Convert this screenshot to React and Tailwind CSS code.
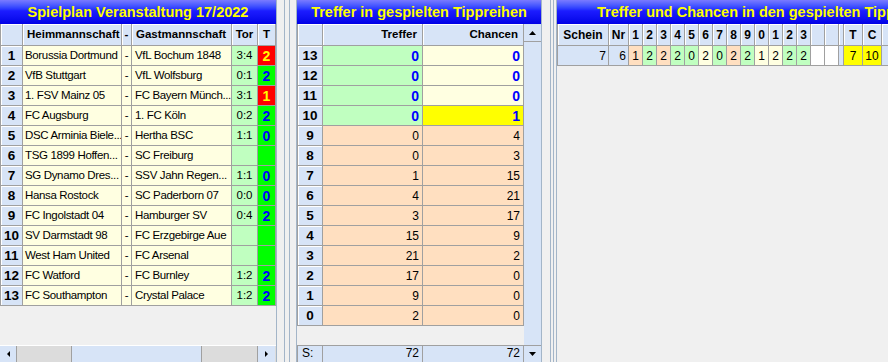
import React from "react";

const LINE = "border-[#a0a0a0]";
const HDR = "bg-[#d7e4f7]";
const BEVEL = "shadow-[inset_1px_1px_0_#ffffff]";
const PALE = "bg-[#ffffe1]";
const LGREEN = "bg-[#c0ffc0]";
const PEACH = "bg-[#ffdfc0]";

const games = [
  { h: "Borussia Dortmund", g: "VfL Bochum 1848", s: "3:4", t: "2", red: true },
  { h: "VfB Stuttgart", g: "VfL Wolfsburg", s: "0:1", t: "2" },
  { h: "1. FSV Mainz 05", g: "FC Bayern Münch...", s: "3:1", t: "1", red: true },
  { h: "FC Augsburg", g: "1. FC Köln", s: "0:2", t: "2" },
  { h: "DSC Arminia Biele...", g: "Hertha BSC", s: "1:1", t: "0" },
  { h: "TSG 1899 Hoffen...", g: "SC Freiburg", s: "", t: "" },
  { h: "SG Dynamo Dres...", g: "SSV Jahn Regen...", s: "1:1", t: "0" },
  { h: "Hansa Rostock", g: "SC Paderborn 07", s: "0:0", t: "0" },
  { h: "FC Ingolstadt 04", g: "Hamburger SV", s: "0:4", t: "2" },
  { h: "SV Darmstadt 98", g: "FC Erzgebirge Aue", s: "", t: "" },
  { h: "West Ham United", g: "FC Arsenal", s: "", t: "" },
  { h: "FC Watford", g: "FC Burnley", s: "1:2", t: "2" },
  { h: "FC Southampton", g: "Crystal Palace", s: "1:2", t: "2" },
];

// [richtige, treffer, chancen]
const hits = [
  [13, 0, 0], [12, 0, 0], [11, 0, 0], [10, 0, 1],
  [9, 0, 4], [8, 0, 3], [7, 1, 15], [6, 4, 21], [5, 3, 17],
  [4, 15, 9], [3, 21, 2], [2, 17, 0], [1, 9, 0], [0, 2, 0],
];

// tipp-reihe im schein, farbe je feld
const tipps = [
  ["1", "p"], ["2", "g"], ["2", "p"], ["2", "g"], ["0", "g"], ["2", "y"], ["0", "g"],
  ["2", "p"], ["2", "g"], ["1", "y"], ["2", "y"], ["2", "g"], ["2", "g"],
];
const tippBg = { p: PEACH, g: LGREEN, y: PALE };

const Tri = ({ dir }) => {
  if (dir === "up") return <svg width="7" height="4" viewBox="0 0 7 4"><polygon points="0,4 7,4 3.5,0" fill="#000" /></svg>;
  if (dir === "down") return <svg width="7" height="4" viewBox="0 0 7 4"><polygon points="0,0 7,0 3.5,4" fill="#000" /></svg>;
  if (dir === "left") return <svg width="3" height="6" viewBox="0 0 3 6"><polygon points="3,0 3,6 0,3" fill="#000" /></svg>;
  return <svg width="3" height="6" viewBox="0 0 3 6"><polygon points="0,0 0,6 3,3" fill="#000" /></svg>;
};

const Title = ({ children, className = "" }) => (
  <div className={"h-[24px] shrink-0 flex items-center bg-linear-to-b from-[#7a7aff] via-[#1c1cff] via-45% to-[#0000e6] text-[#ffff00] font-bold text-[14.5px] whitespace-nowrap overflow-hidden " + className}>
    {children}
  </div>
);

const Spielplan = () => (
  <div className="w-[277px] h-[362px] shrink-0 flex flex-col border-r border-[#a3b5c8]">
    <Title className="justify-center">Spielplan Veranstaltung 17/2022</Title>
    <div className={"border-l " + LINE}>
      <div className={"flex h-[22px] border-b font-bold text-[11.5px] " + LINE + " " + HDR}>
        <div className={"w-[22px] border-r " + LINE + " " + BEVEL} />
        <div className={"w-[99px] border-r pl-[4px] flex items-center " + LINE + " " + BEVEL}>Heimmannschaft</div>
        <div className={"w-[10px] border-r flex items-center justify-center " + LINE + " " + BEVEL}>-</div>
        <div className={"w-[100px] border-r pl-[4px] flex items-center " + LINE + " " + BEVEL}>Gastmannschaft</div>
        <div className={"w-[26px] border-r flex items-center justify-center " + LINE + " " + BEVEL}>Tor</div>
        <div className={"w-[18px] border-r flex items-center justify-center " + LINE + " " + BEVEL}>T</div>
      </div>
      {games.map((m, i) => (
        <div key={i} className={"flex h-[20px] border-b text-[11.5px] tracking-[-0.35px] " + LINE}>
          <div className={"w-[22px] border-r flex items-center justify-center font-bold text-[13.5px] tracking-normal " + LINE + " " + HDR + " " + BEVEL}>{i + 1}</div>
          <div className={"w-[99px] border-r pl-[2px] flex items-center whitespace-nowrap overflow-hidden " + LINE + " " + PALE}>{m.h}</div>
          <div className={"w-[10px] border-r flex items-center justify-center " + LINE + " " + PALE}>-</div>
          <div className={"w-[100px] border-r pl-[3px] flex items-center whitespace-nowrap overflow-hidden " + LINE + " " + PALE}>{m.g}</div>
          <div className={"w-[26px] border-r flex items-center justify-center tracking-normal " + LINE + " " + LGREEN}>{m.s}</div>
          <div className={"w-[18px] border-r flex items-center justify-center font-bold text-[14px] tracking-normal " + LINE + " " + (m.red ? "bg-[#ff0000] text-[#ffff00]" : "bg-[#00ff00] text-[#0000ff]")}>{m.t}</div>
        </div>
      ))}
    </div>
    <div className="flex-1" />
    <div className="h-[17px] shrink-0 flex border-t border-white bg-[#dcdcdc]">
      <div className={"w-[17px] flex items-center justify-center border-r " + LINE + " " + HDR}><Tri dir="left" /></div>
      <div className="w-[54px]" />
      <div className={"w-[131px] border-x " + LINE + " " + HDR} />
      <div className="w-[55px]" />
      <div className={"w-[18px] flex items-center justify-center border-l " + LINE + " " + HDR}><Tri dir="right" /></div>
    </div>
  </div>
);

const Splitter = ({ wide }) =>
  wide ? (
    <div className="w-[19px] h-[362px] shrink-0 flex">
      <div className="ml-[7px] w-px bg-[#a3b5c8]" />
      <div className="ml-[4px] w-px bg-[#a3b5c8]" />
    </div>
  ) : (
    <div className="w-[14px] h-[362px] shrink-0 flex">
      <div className="ml-[8px] w-px bg-[#a3b5c8]" />
      <div className="ml-[2px] w-px bg-[#a3b5c8]" />
    </div>
  );

const Treffer = () => (
  <div className="w-[246px] h-[362px] shrink-0 flex flex-col border-x border-[#a3b5c8]">
    <Title className="justify-center">Treffer in gespielten Tippreihen</Title>
    <div className="flex flex-1 min-h-0">
      <div className="w-[227px] flex flex-col">
        <div className={"flex h-[22px] border-b font-bold text-[11.5px] " + LINE + " " + HDR}>
          <div className={"w-[26px] border-x " + LINE + " " + BEVEL} />
          <div className={"w-[100px] border-r pr-[5px] flex items-center justify-end " + LINE + " " + BEVEL}>Treffer</div>
          <div className={"w-[101px] border-r pr-[5px] flex items-center justify-end " + LINE + " " + BEVEL}>Chancen</div>
        </div>
        {hits.map(([n, t, c]) => {
          const top = n >= 10;
          const txt = top ? "font-bold text-[14px] text-[#0000ff]" : "text-[12px]";
          return (
            <div key={n} className={"flex h-[20px] border-b " + LINE}>
              <div className={"w-[26px] border-x flex items-center justify-center font-bold text-[13.5px] " + LINE + " " + HDR + " " + BEVEL}>{n}</div>
              <div className={"w-[100px] border-r pr-[3px] flex items-center justify-end " + LINE + " " + txt + " " + (top ? LGREEN : PEACH)}>{t}</div>
              <div className={"w-[101px] border-r pr-[3px] flex items-center justify-end " + LINE + " " + txt + " " + (n === 10 ? "bg-[#ffff00]" : top ? PALE : PEACH)}>{c}</div>
            </div>
          );
        })}
        <div className="flex-1" />
        <div className={"flex h-[17px] shrink-0 border-t text-[12px] " + LINE}>
          <div className={"w-[26px] border-x pl-[4px] pt-[1px] " + LINE + " " + HDR}>S:</div>
          <div className={"w-[100px] border-r pr-[3px] pt-[1px] text-right " + LINE + " " + HDR}>72</div>
          <div className={"w-[101px] border-r pr-[3px] pt-[1px] text-right " + LINE + " " + HDR}>72</div>
        </div>
      </div>
      <div className={"w-[17px] flex flex-col " + HDR}>
        <div className={"h-[18px] flex items-center justify-center border-b " + LINE}><Tri dir="up" /></div>
        <div className="flex-1" />
        <div className={"h-[17px] flex items-center justify-center border-t " + LINE}><Tri dir="down" /></div>
      </div>
    </div>
  </div>
);

const Chancen = () => (
  <div className="flex-1 min-w-0 h-[362px] flex flex-col border-l border-[#a3b5c8] overflow-hidden">
    <Title className="pl-[40px]">Treffer und Chancen in den gespielten Tippreihen</Title>
    <div className={"flex h-[22px] border-b font-bold text-[12px] " + LINE + " " + HDR}>
      <div className={"w-[52px] shrink-0 border-x flex items-center justify-center " + LINE + " " + BEVEL}>Schein</div>
      <div className={"w-[20px] shrink-0 border-r flex items-center justify-center " + LINE + " " + BEVEL}>Nr</div>
      {["1", "2", "3", "4", "5", "6", "7", "8", "9", "0", "1", "2", "3"].map((d, i) => (
        <div key={i} className={"w-[14px] shrink-0 border-r flex items-center justify-center " + LINE + " " + BEVEL}>{d}</div>
      ))}
      <div className={"w-[14px] shrink-0 border-r " + LINE + " " + BEVEL} />
      <div className={"w-[14px] shrink-0 border-r " + LINE + " " + BEVEL} />
      <div className={"w-[5px] shrink-0 border-r " + LINE + " " + BEVEL} />
      <div className={"w-[19px] shrink-0 border-r flex items-center justify-center " + LINE + " " + BEVEL}>T</div>
      <div className={"w-[19px] shrink-0 border-r flex items-center justify-center " + LINE + " " + BEVEL}>C</div>
      <div className={"w-[40px] shrink-0 border-r " + LINE + " " + BEVEL} />
    </div>
    <div className={"flex h-[20px] border-b text-[12px] " + LINE}>
      <div className={"w-[52px] shrink-0 border-x pr-[2px] flex items-center justify-end " + LINE + " " + HDR}>7</div>
      <div className={"w-[20px] shrink-0 border-r pr-[2px] flex items-center justify-end " + LINE + " " + HDR}>6</div>
      {tipps.map(([d, c], i) => (
        <div key={i} className={"w-[14px] shrink-0 border-r flex items-center justify-center " + LINE + " " + tippBg[c]}>{d}</div>
      ))}
      <div className={"w-[14px] shrink-0 border-r bg-white " + LINE} />
      <div className={"w-[14px] shrink-0 border-r bg-white " + LINE} />
      <div className={"w-[5px] shrink-0 border-r " + LINE + " " + HDR} />
      <div className={"w-[19px] shrink-0 border-r flex items-center justify-center bg-[#ffff00] " + LINE}>7</div>
      <div className={"w-[19px] shrink-0 border-r flex items-center justify-center bg-[#ffff00] " + LINE}>10</div>
      <div className={"w-[40px] shrink-0 border-r " + LINE + " " + HDR} />
    </div>
  </div>
);

export default function App() {
  return (
    <div className="w-[888px] h-[362px] flex overflow-hidden bg-[#f0f0f0] text-black font-['Liberation_Sans',Arial,sans-serif] leading-none select-none">
      <Spielplan />
      <Splitter wide />
      <Treffer />
      <Splitter />
      <Chancen />
    </div>
  );
}
